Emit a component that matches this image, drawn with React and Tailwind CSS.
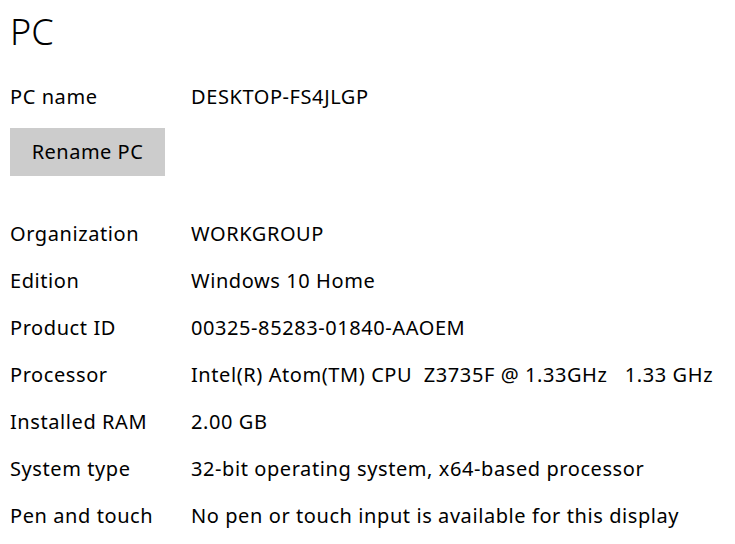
import React from "react";

const rows = [
  ["Organization", "WORKGROUP"],
  ["Edition", "Windows 10 Home"],
  ["Product ID", "00325-85283-01840-AAOEM"],
  ["Processor", "Intel(R) Atom(TM) CPU  Z3735F @ 1.33GHz   1.33 GHz"],
  ["Installed RAM", "2.00 GB"],
  ["System type", "32-bit operating system, x64-based processor"],
  ["Pen and touch", "No pen or touch input is available for this display"],
];

function Row({ label, value }) {
  return (
    <div className="flex items-center h-[47px] text-[20px] tracking-[0.58px] whitespace-pre">
      <div className="w-[181px] shrink-0">{label}</div>
      <div>{value}</div>
    </div>
  );
}

export default function App() {
  return (
    <div
      className="w-[735px] h-[544px] bg-white text-black pl-[10px] pt-[8px] overflow-hidden"
      style={{ fontFamily: '"Noto Sans", "Open Sans", sans-serif' }}
    >
      <h1 className="text-[36px] leading-[48px] font-light">PC</h1>
      <div className="mt-[17px]">
        <Row label="PC name" value="DESKTOP-FS4JLGP" />
      </div>
      <button className="mt-[8px] w-[155px] h-[48px] bg-[#cccccc] text-[20px] tracking-[0.5px] flex items-center justify-center">
        Rename PC
      </button>
      <div className="mt-[34px]">
        {rows.map(([l, v]) => (
          <Row key={l} label={l} value={v} />
        ))}
      </div>
    </div>
  );
}
